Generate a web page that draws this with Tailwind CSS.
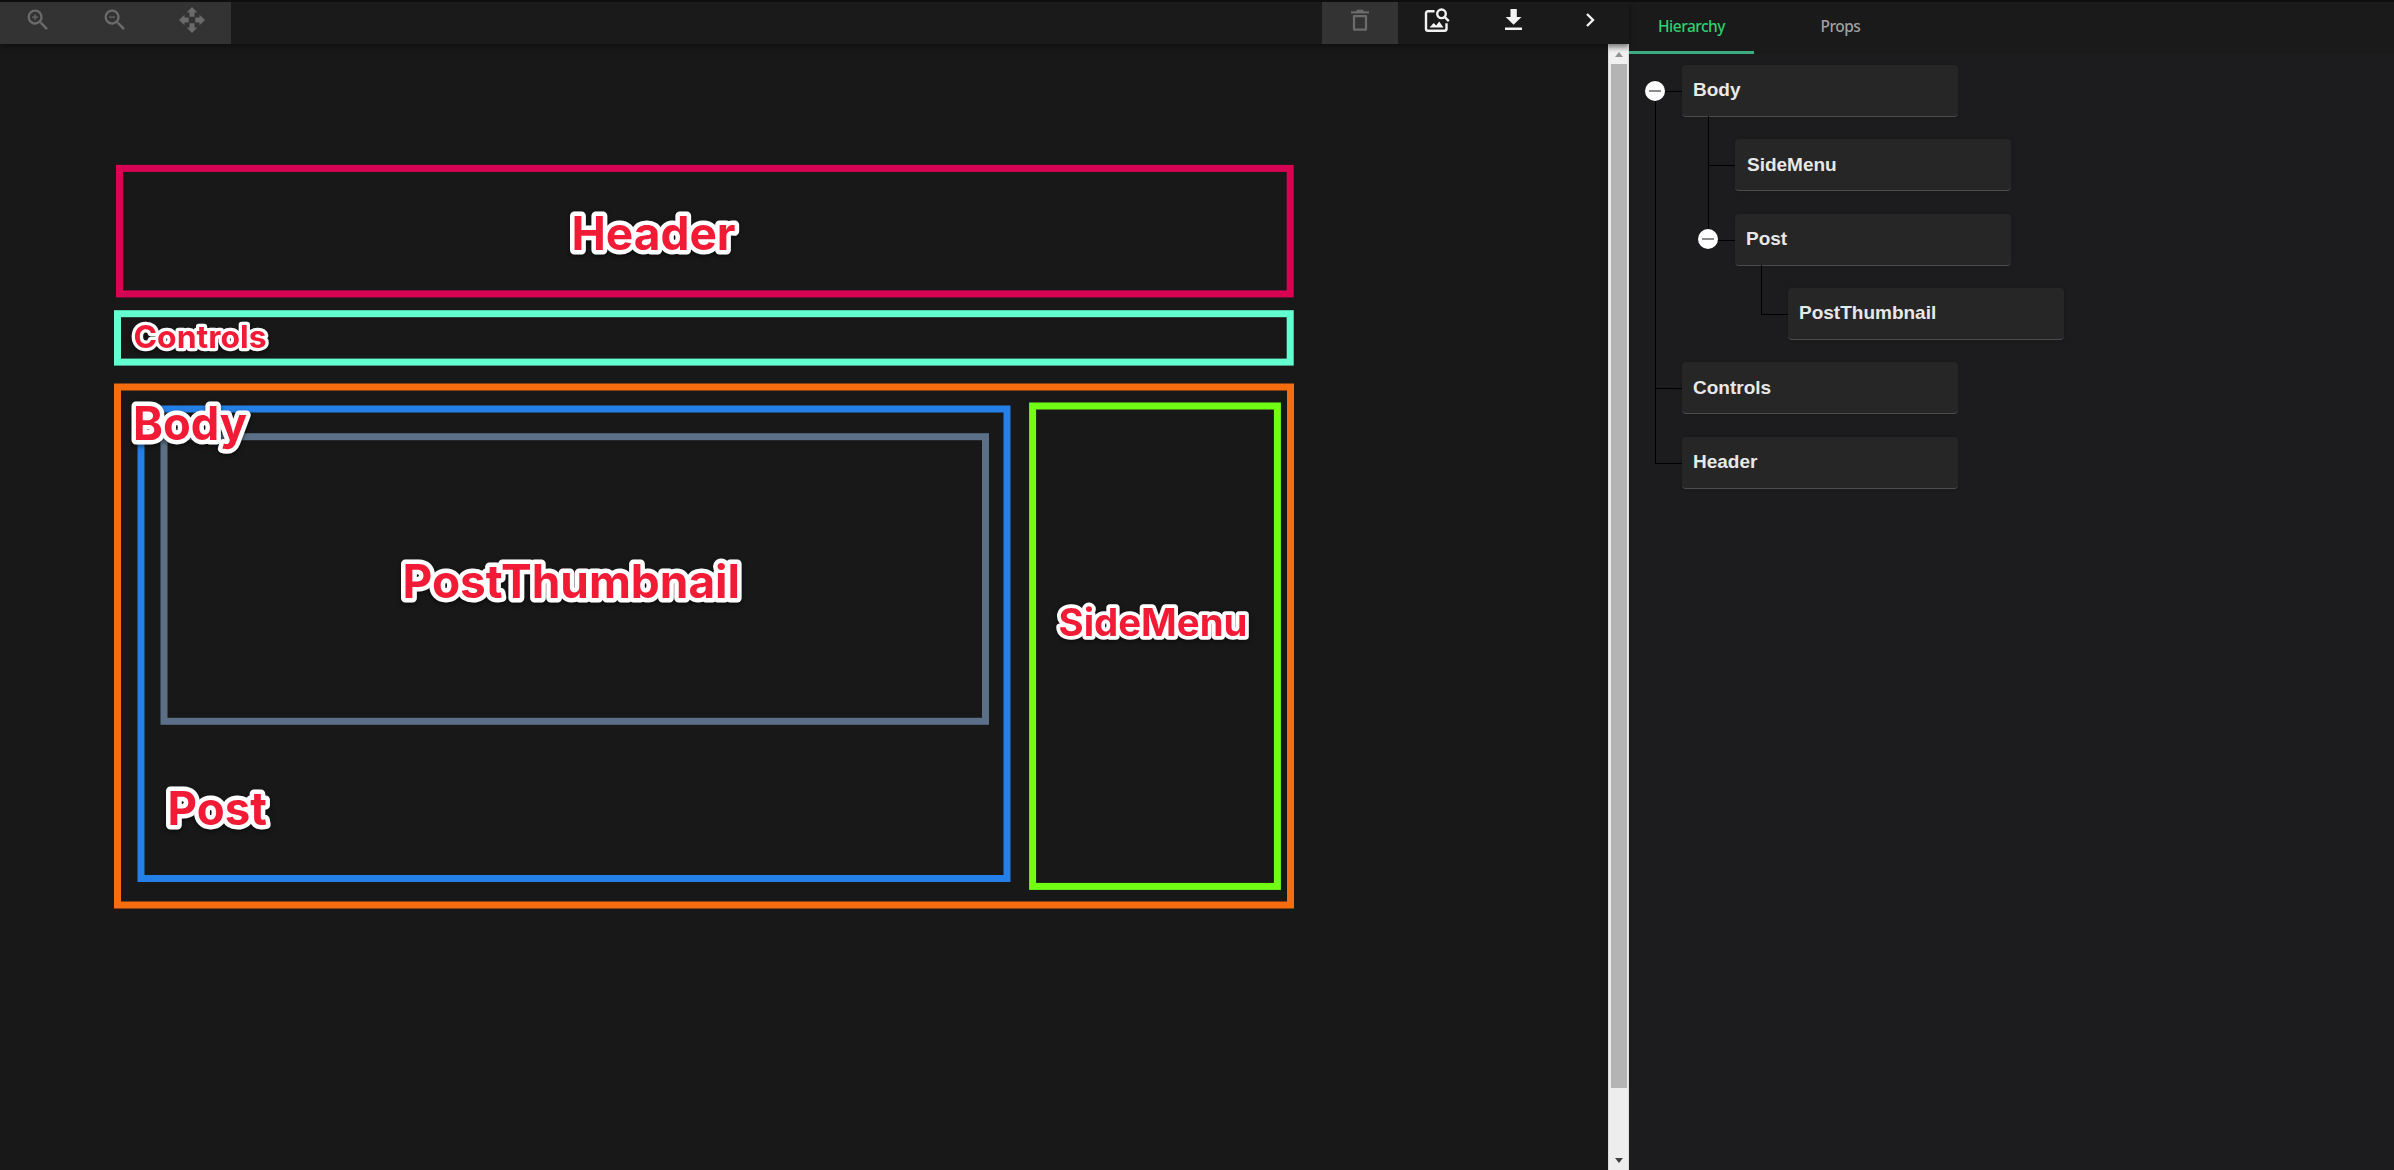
<!DOCTYPE html>
<html lang="en">
<head>
<meta charset="utf-8">
<title>Component Hierarchy</title>
<script src="https://cdn.jsdelivr.net/npm/@tailwindcss/browser@4"></script>
</head>
<body class="h-[1170px] w-[2394px] overflow-hidden bg-[#181818] border-t-2 border-[#0e0e0e] flex font-['Liberation_Sans',sans-serif]">

<!-- Editor -->
<main class="w-[1629px] flex flex-col">
  <header class="relative z-10 h-[42px] bg-[#1a1a1a] shadow-[0_2px_6px_rgba(0,0,0,0.45)] flex justify-between shrink-0">
    <div class="flex bg-[#333333] text-[#6b6b6b]">
      <button class="w-[77px] h-full pb-[7px] pr-px flex items-center justify-center">
        <svg class="size-7" viewBox="0 0 24 24" fill="currentColor"><path d="M15.5 14h-.79l-.28-.27A6.47 6.47 0 0 0 16 9.5 6.5 6.5 0 1 0 9.5 16c1.61 0 3.09-.59 4.23-1.57l.27.28v.79l5 4.99L20.49 19l-4.99-5zm-6 0C7.01 14 5 11.99 5 9.5S7.01 5 9.5 5 14 7.01 14 9.5 11.99 14 9.5 14zM12 10h-2v2H9v-2H7V9h2V7h1v2h2v1z"/></svg>
      </button>
      <button class="w-[77px] h-full pb-[7px] pr-px flex items-center justify-center">
        <svg class="size-7" viewBox="0 0 24 24" fill="currentColor"><path d="M15.5 14h-.79l-.28-.27A6.47 6.47 0 0 0 16 9.5 6.5 6.5 0 1 0 9.5 16c1.61 0 3.09-.59 4.23-1.57l.27.28v.79l5 4.99L20.49 19l-4.99-5zm-6 0C7.01 14 5 11.99 5 9.5S7.01 5 9.5 5 14 7.01 14 9.5 11.99 14 9.5 14zM7 9h5v1H7z"/></svg>
      </button>
      <button class="w-[77px] h-full pb-1.5 pr-px flex items-center justify-center">
        <svg class="size-[26px]" viewBox="0 0 26 26" fill="currentColor"><path d="M13 0l5.3 5.5h-2.8v4.2h-5V5.500H7.700zM13 26l5.300-5.500h-2.800v-4.200h-5v4.200H7.700zM0 13l5.500-5.300v2.800h4.200v5H5.500v2.800zM26 13l-5.500-5.300v2.800h-4.200v5h4.200v2.800z"/></svg>
      </button>
    </div>
    <div class="flex w-[307px] text-[#f2f2f2]">
      <button class="w-[76px] h-full pb-1.5 bg-[#333333] text-[#6b6b6b] flex items-center justify-center">
        <svg class="h-[23px] w-[18px]" viewBox="0 0 18 23" fill="none" stroke="currentColor"><path stroke-width="2.300" d="M0 3.300h18M5.500 2h7"/><path stroke-width="2.200" stroke-linejoin="round" d="M3 7.100h12v13.500H3z"/></svg>
      </button>
      <button class="w-[77px] h-full pb-1.5 flex items-center justify-center">
        <svg class="h-[26px] w-[26px]" viewBox="0 0 26 26" fill="none" stroke="currentColor" stroke-width="2.400"><path d="M10.500 4.200H4a2 2 0 0 0-2 2v15.600a2 2 0 0 0 2 2h16.500a2 2 0 0 0 2-2v-5.500"/><circle cx="17.500" cy="6.800" r="4.300"/><path d="M20.500 9.800l4.300 4.300"/><path stroke="none" fill="currentColor" d="M5.500 20.500l4.200-4.600 2.500 2.500 3-4 4.300 6.100z"/></svg>
      </button>
      <button class="w-[77px] h-full pb-[7px] flex items-center justify-center">
        <svg class="h-[21px] w-[17px]" viewBox="0 0 17 21" fill="currentColor"><path d="M5.500 0h6.300v8H16.500L8.600 15.800.7 8h4.800zM0 18.600h17V21H0z"/></svg>
      </button>
      <button class="w-[77px] h-full pb-1.5 flex items-center justify-center">
        <svg class="h-[14px] w-[9px]" viewBox="0 0 9 14" fill="none" stroke="currentColor" stroke-width="2.400"><path d="M1 1l6 6-6 6"/></svg>
      </button>
    </div>
  </header>

  <div class="flex flex-1">
    <!-- Component canvas; user units match window pixels below the toolbar -->
    <svg class="w-[1608px] h-[1126px] font-['Inter',sans-serif] font-bold [font-optical-sizing:none]" viewBox="0 44 1608 1126">
      <g fill="none" stroke-width="7">
        <rect x="119.500" y="168.400" width="1170.700" height="125.500" stroke="#d80453"/>
        <rect x="117.500" y="313.700" width="1172.700" height="48.400" stroke="#64ffd0"/>
        <rect x="117.500" y="387" width="1173" height="518" stroke="#f66d10"/>
        <rect x="141" y="409" width="866" height="469.500" stroke="#2480e8"/>
        <rect x="164" y="436.700" width="821.500" height="284.600" stroke="#5b7088"/>
        <rect x="1032.600" y="406" width="244.800" height="480.400" stroke="#70ff14"/>
      </g>
      <g class="fill-[#f21b36] stroke-white stroke-[9px] [paint-order:stroke] [stroke-linejoin:round] drop-shadow-[0_2px_2px_rgba(0,0,0,0.5)]">
        <text x="571.500" y="250" font-size="46" textLength="164" lengthAdjust="spacingAndGlyphs">Header</text>
        <text x="133.500" y="348" font-size="31.500" textLength="133" lengthAdjust="spacingAndGlyphs" stroke-width="6.500">Controls</text>
        <text x="133" y="439.500" font-size="46" textLength="114" lengthAdjust="spacingAndGlyphs">Body</text>
        <text x="402.500" y="597.700" font-size="46" textLength="337.500" lengthAdjust="spacingAndGlyphs">PostThumbnail</text>
        <text x="1058.500" y="635.700" font-size="38" textLength="189" lengthAdjust="spacingAndGlyphs" stroke-width="7.500">SideMenu</text>
        <text x="167.500" y="825" font-size="46" textLength="99.500" lengthAdjust="spacingAndGlyphs">Post</text>
      </g>
    </svg>

    <div class="w-[21px] bg-[#ededed] border-x border-[#dcdcdc] flex flex-col items-center">
      <div class="h-5 w-full flex items-center justify-center shrink-0 bg-linear-to-b from-[#c4c4c4] to-[#f0f0f0] to-40%"><svg class="w-2 h-[5px]" viewBox="0 0 8 5" fill="#929292"><path d="M0 5l4-5 4 5z"/></svg></div>
      <div class="h-[1024px] w-4 bg-[#b4b4b4]"></div>
      <div class="mt-auto mb-[7px] shrink-0"><svg class="w-2 h-[5px]" viewBox="0 0 8 5" fill="#404040"><path d="M0 0h8L4 5z"/></svg></div>
    </div>
  </div>
</main>

<!-- Side panel -->
<aside class="flex-1 bg-[#1c1c1e]">
  <nav class="h-[52px] bg-[#1a1a1a] flex font-['Noto_Sans',sans-serif] text-[15.5px] tracking-[-0.5px]">
    <div class="w-[125px] border-b-[3px] border-[#3dab80] text-[#2dd070] font-medium flex items-center justify-center">Hierarchy</div>
    <div class="w-[125px] ml-[24px] text-[#a0a0a0] font-medium flex items-center justify-center pb-[3px]">Props</div>
  </nav>

  <div class="text-[19px] font-bold text-[#e8e8e8]">
    <!-- Body -->
    <div class="flex h-[74.3px] items-center">
      <div class="relative w-[53px] h-full flex items-center justify-center">
        <i class="absolute left-[26px] top-1/2 w-px h-1/2 bg-black"></i>
        <i class="absolute left-[26px] right-0 top-1/2 h-px bg-black"></i>
        <b class="relative mr-px mb-px size-5 rounded-full bg-white flex items-center justify-center"><i class="w-3 h-0.5 bg-[#8c8c8c]"></i></b>
      </div>
      <div class="relative w-[276px] h-[52px] rounded-[4px] bg-[#262626] border-b border-[#4c4c4c] pl-[11px] flex items-center shadow-[0_0_3px_rgba(0,0,0,0.2)]">Body<i class="absolute left-[26px] top-full w-px h-3 bg-black"></i></div>
    </div>
    <!-- SideMenu -->
    <div class="flex h-[74.3px] items-center">
      <div class="relative w-[53px] h-full"><i class="absolute left-[26px] top-0 w-px h-full bg-black"></i></div>
      <div class="relative w-[53px] h-full">
        <i class="absolute left-[26px] top-0 w-px h-full bg-black"></i>
        <i class="absolute left-[26px] right-0 top-1/2 h-px bg-black"></i>
      </div>
      <div class="w-[276px] h-[52px] rounded-[4px] bg-[#262626] border-b border-[#4c4c4c] pl-3 flex items-center shadow-[0_0_3px_rgba(0,0,0,0.2)]">SideMenu</div>
    </div>
    <!-- Post -->
    <div class="flex h-[74.3px] items-center">
      <div class="relative w-[53px] h-full"><i class="absolute left-[26px] top-0 w-px h-full bg-black"></i></div>
      <div class="relative w-[53px] h-full flex items-center justify-center">
        <i class="absolute left-[26px] top-0 w-px h-1/2 bg-black"></i>
        <i class="absolute left-[26px] right-0 top-1/2 h-px bg-black"></i>
        <b class="relative mr-px mb-px size-5 rounded-full bg-white flex items-center justify-center"><i class="w-3 h-0.5 bg-[#8c8c8c]"></i></b>
      </div>
      <div class="relative w-[276px] h-[52px] rounded-[4px] bg-[#262626] border-b border-[#4c4c4c] pl-[11px] flex items-center shadow-[0_0_3px_rgba(0,0,0,0.2)]">Post<i class="absolute left-[26px] top-full w-px h-3 bg-black"></i></div>
    </div>
    <!-- PostThumbnail -->
    <div class="flex h-[74.3px] items-center">
      <div class="relative w-[53px] h-full"><i class="absolute left-[26px] top-0 w-px h-full bg-black"></i></div>
      <div class="w-[53px]"></div>
      <div class="relative w-[53px] h-full">
        <i class="absolute left-[26px] top-0 w-px h-1/2 bg-black"></i>
        <i class="absolute left-[26px] right-0 top-1/2 h-px bg-black"></i>
      </div>
      <div class="w-[276px] h-[52px] rounded-[4px] bg-[#262626] border-b border-[#4c4c4c] pl-[11px] flex items-center shadow-[0_0_3px_rgba(0,0,0,0.2)]">PostThumbnail</div>
    </div>
    <!-- Controls -->
    <div class="flex h-[74.3px] items-center">
      <div class="relative w-[53px] h-full">
        <i class="absolute left-[26px] top-0 w-px h-full bg-black"></i>
        <i class="absolute left-[26px] right-0 top-1/2 h-px bg-black"></i>
      </div>
      <div class="w-[276px] h-[52px] rounded-[4px] bg-[#262626] border-b border-[#4c4c4c] pl-[11px] flex items-center shadow-[0_0_3px_rgba(0,0,0,0.2)]">Controls</div>
    </div>
    <!-- Header -->
    <div class="flex h-[74.3px] items-center">
      <div class="relative w-[53px] h-full">
        <i class="absolute left-[26px] top-0 w-px h-1/2 bg-black"></i>
        <i class="absolute left-[26px] right-0 top-1/2 h-px bg-black"></i>
      </div>
      <div class="w-[276px] h-[52px] rounded-[4px] bg-[#262626] border-b border-[#4c4c4c] pl-[11px] flex items-center shadow-[0_0_3px_rgba(0,0,0,0.2)]">Header</div>
    </div>
  </div>
</aside>
</body>
</html>
